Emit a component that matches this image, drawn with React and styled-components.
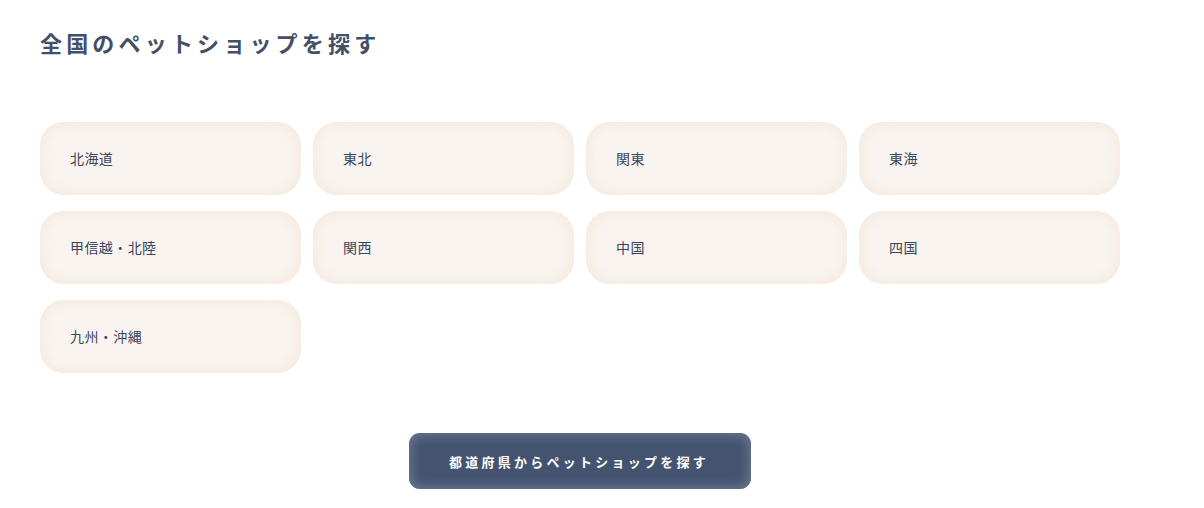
import React from 'react';
import styled, { createGlobalStyle } from 'styled-components';

const GlobalStyle = createGlobalStyle`
  body {
    margin: 0;
    background: #fff;
    font-family: "Noto Sans CJK JP", "Noto Sans", sans-serif;
  }
`;

const Section = styled.section`
  width: 1080px;
  padding: 25px 0 0 40px;
`;

const Title = styled.h2`
  margin: 0;
  font-size: 22px;
  line-height: 34px;
  font-weight: 700;
  letter-spacing: 0.19em;
  color: #434f66;
`;

const Grid = styled.div`
  display: grid;
  grid-template-columns: repeat(4, 261px);
  column-gap: 12px;
  row-gap: 16px;
  margin-top: 63px;
`;

const Area = styled.a`
  display: flex;
  align-items: center;
  height: 73px;
  padding: 0 0 1px 30px;
  box-sizing: border-box;
  border-radius: 24px;
  background: #f9f4ef;
  box-shadow: inset 0 0 14px rgba(242, 226, 210, 0.85);
  font-size: 14px;
  color: #3a4560;
  text-decoration: none;
  letter-spacing: 0.03em;
  cursor: pointer;
`;

const Footer = styled.div`
  display: flex;
  justify-content: center;
  margin-top: 60px;
`;

const Button = styled.button`
  width: 342px;
  height: 56px;
  border: none;
  border-radius: 11px;
  background: #445370;
  box-shadow: inset 0 0 14px rgba(135, 145, 165, 0.8);
  color: #fff;
  font-family: inherit;
  font-size: 13px;
  font-weight: 700;
  letter-spacing: 0.25em;
  padding-left: 4px;
  cursor: pointer;
`;

const areas = ['北海道', '東北', '関東', '東海', '甲信越・北陸', '関西', '中国', '四国', '九州・沖縄'];

export default function App() {
  return (
    <>
      <GlobalStyle />
      <Section>
        <Title>全国のペットショップを探す</Title>
        <Grid>
          {areas.map((name) => (
            <Area key={name}>{name}</Area>
          ))}
        </Grid>
        <Footer>
          <Button>都道府県からペットショップを探す</Button>
        </Footer>
      </Section>
    </>
  );
}
